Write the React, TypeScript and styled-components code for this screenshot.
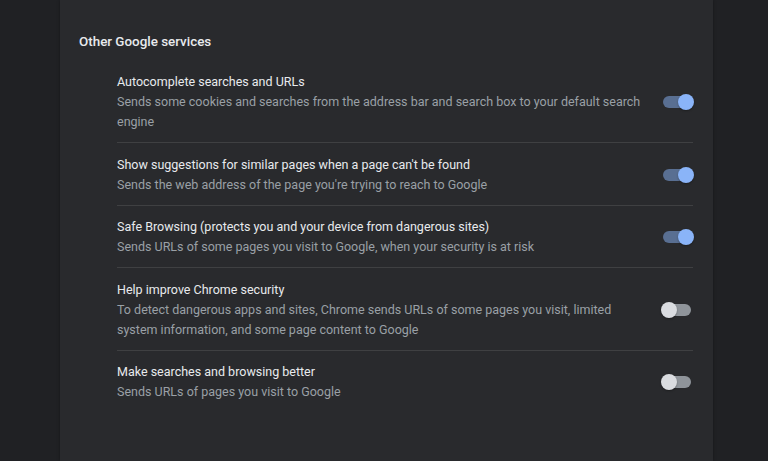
import React from 'react'
import styled, { createGlobalStyle } from 'styled-components'

const GlobalStyle = createGlobalStyle`
    html, body {
        margin: 0;
        padding: 0;
        background: #202124;
        font-family: Roboto, "Liberation Sans", sans-serif;
        -webkit-font-smoothing: antialiased;
    }
`

const services = [
    {
        title: 'Autocomplete searches and URLs',
        desc: 'Sends some cookies and searches from the address bar and search box to your default search engine',
        on: true,
    },
    {
        title: "Show suggestions for similar pages when a page can't be found",
        desc: "Sends the web address of the page you're trying to reach to Google",
        on: true,
    },
    {
        title: 'Safe Browsing (protects you and your device from dangerous sites)',
        desc: 'Sends URLs of some pages you visit to Google, when your security is at risk',
        on: true,
    },
    {
        title: 'Help improve Chrome security',
        desc: 'To detect dangerous apps and sites, Chrome sends URLs of some pages you visit, limited system information, and some page content to Google',
        on: false,
    },
    {
        title: 'Make searches and browsing better',
        desc: 'Sends URLs of pages you visit to Google',
        on: false,
    },
]

const App = () => {
    return (
        <Page>
            <GlobalStyle />
            <Card>
                <SectionTitle>Other Google services</SectionTitle>
                <List>
                    {services.map((row, index) => (
                        <Row key={index} $first={index === 0}>
                            <RowText>
                                <RowLabel>{row.title}</RowLabel>
                                <RowDesc>{row.desc}</RowDesc>
                            </RowText>
                            <Toggle>
                                <ToggleBar $on={row.on} />
                                <ToggleKnob $on={row.on} />
                            </Toggle>
                        </Row>
                    ))}
                </List>
            </Card>
        </Page>
    )
}

export default App

const Page = styled.div`
    display: flex;
    width: 768px;
    height: 461px;
    overflow: hidden;
    background: #202124;
`

const Card = styled.div`
    margin-left: 60px;
    width: 653px;
    height: 100%;
    background: #292a2d;
    box-shadow: 0 0 3px rgba(0, 0, 0, 0.35);
    padding-top: 32px;
    box-sizing: border-box;
`

const SectionTitle = styled.div`
    padding-left: 19px;
    font-size: 13.4px;
    line-height: 20px;
    font-weight: 500;
    color: #e8eaed;
`

const List = styled.div`
    margin-top: 7.75px;
    margin-left: 57px;
    margin-right: 20px;
`

const Row = styled.div<{ $first: boolean }>`
    display: flex;
    align-items: center;
    gap: 14px;
    padding: 11.25px 0 10.25px;
    border-top: 1px solid ${p => (p.$first ? 'transparent' : '#3f4042')};
`

const RowText = styled.div`
    flex: 1;
    min-width: 0;
    font-size: 12.5px;
    line-height: 20px;
`

const RowLabel = styled.div`
    color: #e8eaed;
`

const RowDesc = styled.div`
    color: #9aa0a6;
`

const Toggle = styled.div`
    position: relative;
    flex: none;
    width: 33px;
    height: 16px;
    margin-right: -1px;
`

const ToggleBar = styled.div<{ $on: boolean }>`
    position: absolute;
    left: 2px;
    top: 2px;
    width: 28px;
    height: 12px;
    border-radius: 6px;
    background: ${p => (p.$on ? 'rgba(138, 180, 248, 0.5)' : '#9aa0a6')};
    opacity: ${p => (p.$on ? 1 : 0.9)};
`

const ToggleKnob = styled.div<{ $on: boolean }>`
    position: absolute;
    top: 0;
    left: ${p => (p.$on ? '17px' : '0')};
    width: 16px;
    height: 16px;
    border-radius: 50%;
    background: ${p => (p.$on ? '#8ab4f8' : '#dadce0')};
    box-shadow: 0 1px 2px rgba(0, 0, 0, 0.3);
`
